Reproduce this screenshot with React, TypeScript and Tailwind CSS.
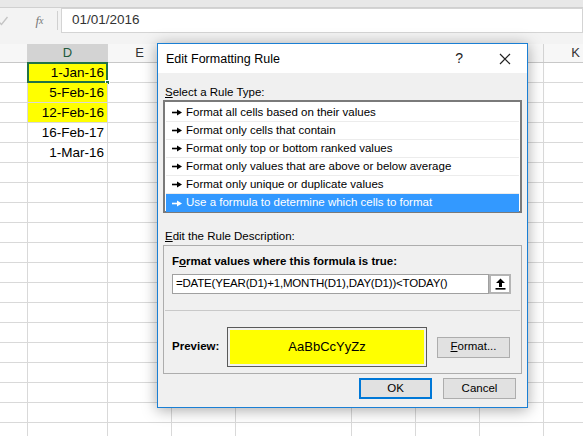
import React from "react";

const cols = [
  { key: "C", w: "w-[64px]", label: true },
  { key: "D", w: "w-[80px]", label: true },
  { key: "E", w: "w-[64px]", label: true },
  { key: "F", w: "w-[64px]", label: false },
  { key: "G", w: "w-[116px]", label: false },
  { key: "H", w: "w-[64px]", label: false },
  { key: "I", w: "w-[64px]", label: false },
  { key: "J", w: "w-[64px]", label: false },
  { key: "K", w: "w-[64px]", label: true },
];

const dates = ["1-Jan-16", "5-Feb-16", "12-Feb-16", "16-Feb-17", "1-Mar-16"];

const ruleTypes = [
  "Format all cells based on their values",
  "Format only cells that contain",
  "Format only top or bottom ranked values",
  "Format only values that are above or below average",
  "Format only unique or duplicate values",
  "Use a formula to determine which cells to format",
];

function Arrow({ color }: { color: string }) {
  return (
    <svg width="10" height="7" viewBox="0 0 10 7" className="shrink-0">
      <rect x="0" y="2.7" width="6" height="1.6" fill={color} />
      <polygon points="5,0.5 10,3.5 5,6.5" fill={color} />
    </svg>
  );
}

function Sheet() {
  const rows = Array.from({ length: 19 }, (_, i) => i);
  return (
    <div className="flex flex-col">
      {/* column headers (F-J sit under the dialog) */}
      <div className="flex h-[19px] -ml-[36px] border-b border-[#c8c8c8] bg-[#f7f7f7]">
        {cols.map((c) => (
          <div
            key={c.key}
            className={`${c.w} shrink-0 flex items-center justify-center border-r border-[#d4d4d4] text-[13px] ${
              c.key === "D" ? "bg-[#d3d3d3] text-[#215a3c]" : "text-[#333]"
            }`}
          >
            {c.label ? c.key : null}
          </div>
        ))}
      </div>
      {rows.map((r) => (
        <div key={r} className="flex h-[20px] -ml-[36px] border-b border-[#d9d9d9]">
          {cols.map((c) => {
            const isD = c.key === "D";
            const val = isD ? dates[r] : undefined;
            const yellow = isD && r < 3;
            return (
              <div
                key={c.key}
                className={`${c.w} shrink-0 relative flex items-end justify-end pr-[3px] pb-[1px] leading-[16px] border-r border-[#d9d9d9] text-[13.5px] text-black ${
                  yellow ? "bg-[#ffff00]" : ""
                }`}
              >
                {val}
                {isD && r === 0 && (
                  <>
                    <div className="absolute -left-[1px] -top-[1px] w-[81px] h-[21px] border-2 border-[#217346]" />
                    <div className="absolute -right-[3px] -bottom-[3px] w-[5px] h-[5px] bg-[#217346] border border-white" />
                  </>
                )}
              </div>
            );
          })}
        </div>
      ))}
    </div>
  );
}

function Dialog() {
  return (
    <div className="absolute left-[157px] top-[43px] w-[371px] h-[365px] border border-[#1a7fd4] bg-[#f0f0f0] shadow-[0_2px_14px_rgba(0,0,0,0.35)] flex flex-col text-[11.5px] text-black">
      {/* title bar */}
      <div className="h-[29px] bg-white flex items-center pl-[8px] pr-[16px] shrink-0">
        <span className="text-[12.5px] flex-1 pt-[1px]">Edit Formatting Rule</span>
        <span className="text-[14px] mr-[36px] text-[#222]">?</span>
        <svg width="12" height="12" viewBox="0 0 12 12">
          <path d="M1 1 L11 11 M11 1 L1 11" stroke="#222" strokeWidth="1.2" />
        </svg>
      </div>

      <div className="flex flex-col px-[5px]">
        <div className="pt-[11px] pl-[2px] h-[27px] leading-[16px]">
          <span className="underline">S</span>elect a Rule Type:
        </div>
        <div className="h-[113px] border-2 border-[#7a7a7a] bg-white px-[1px] pt-[2px]">
          {ruleTypes.map((t, i) => {
            const sel = i === ruleTypes.length - 1;
            return (
              <div
                key={t}
                className={`h-[18px] flex items-center gap-[4px] pl-[6px] ${
                  sel ? "bg-[#3399ff] text-white" : "border-b border-[#ececec] text-black"
                }`}
              >
                <Arrow color={sel ? "#ffffff" : "#000000"} />
                <span>{t}</span>
              </div>
            );
          })}
        </div>

        <div className="mt-[15px] pl-[2px] h-[17px] leading-[16px]">
          <span className="underline">E</span>dit the Rule Description:
        </div>
        <div className="h-[129px] border border-[#adadad] flex flex-col">
          <div className="pt-[7px] pl-[8px] h-[24px] leading-[16px] font-bold">
            F<span className="underline">o</span>rmat values where this formula is true:
          </div>
          <div className="flex mt-[4px] ml-[8px] h-[20px]">
            <div className="w-[317px] border border-[#a0a0a0] bg-white flex items-center pl-[3px] text-[11.5px] tracking-[-0.2px]">
              =DATE(YEAR(D1)+1,MONTH(D1),DAY(D1))&lt;TODAY()
            </div>
            <div className="w-[22px] border-2 border-[#b4b4b4] bg-white flex items-center justify-center">
              <svg width="11" height="12" viewBox="0 0 11 12">
                <path d="M5.5 0.5 L10 5 L7 5 L7 9 L4 9 L4 5 L1 5 Z" fill="#000" />
                <rect x="0.5" y="10" width="10" height="1.6" fill="#000" />
              </svg>
            </div>
          </div>
          <div className="mt-[16px] mx-[1px] h-[1px] bg-[#c9c9c9]" />
          <div className="flex items-center mt-[16px] ml-[8px]">
            <div className="w-[55px] font-bold">Preview:</div>
            <div className="w-[200px] h-[40px] border border-[#5a5a5a] p-[2px] bg-[#f0f0f0]">
              <div className="w-full h-full bg-[#ffff00] flex items-center justify-center text-[13px]">
                AaBbCcYyZz
              </div>
            </div>
            <div className="ml-[10px] w-[73px] h-[21px] border border-[#adadad] bg-[#e1e1e1] flex items-center justify-center">
              <span className="underline">F</span>ormat...
            </div>
          </div>
        </div>

        <div className="flex justify-end gap-[11px] mt-[4px] pr-[6px]">
          <div className="w-[73px] h-[21px] border-2 border-[#0078d7] bg-[#e1e1e1] flex items-center justify-center">
            OK
          </div>
          <div className="w-[73px] h-[21px] border border-[#adadad] bg-[#e1e1e1] flex items-center justify-center">
            Cancel
          </div>
        </div>
      </div>
    </div>
  );
}

export default function App() {
  return (
    <div
      className="relative w-[583px] h-[436px] overflow-hidden bg-white"
      style={{ fontFamily: '"Liberation Sans", Arial, sans-serif' }}
    >
      <div className="h-[8px] bg-[#e8e8e8] border-b border-[#d0d0d0]" />
      <div className="h-[25px] flex items-stretch bg-[#f3f3f3]">
        <div className="w-[12px] flex items-center">
          <svg width="10" height="10" viewBox="0 0 10 10" className="-ml-[2px]">
            <path d="M0 5 L3.5 8.5 L9.5 1" stroke="#c4c4c4" strokeWidth="1.4" fill="none" />
          </svg>
        </div>
        <div className="w-[45px] flex items-center justify-center pl-[10px] text-[13px] italic text-[#777]" style={{ fontFamily: '"Liberation Serif", serif' }}>
          f<span className="text-[10px]">x</span>
        </div>
        <div className="w-[1px] my-[3px] bg-[#d0d0d0]" />
        <div className="flex-1 ml-[3px] border border-[#d4d4d4] bg-white flex items-center pl-[10px] text-[13.5px] text-[#333]">
          01/01/2016
        </div>
      </div>
      <div className="h-[11px] bg-[#f3f3f3]" />
      <Sheet />
      <Dialog />
    </div>
  );
}
